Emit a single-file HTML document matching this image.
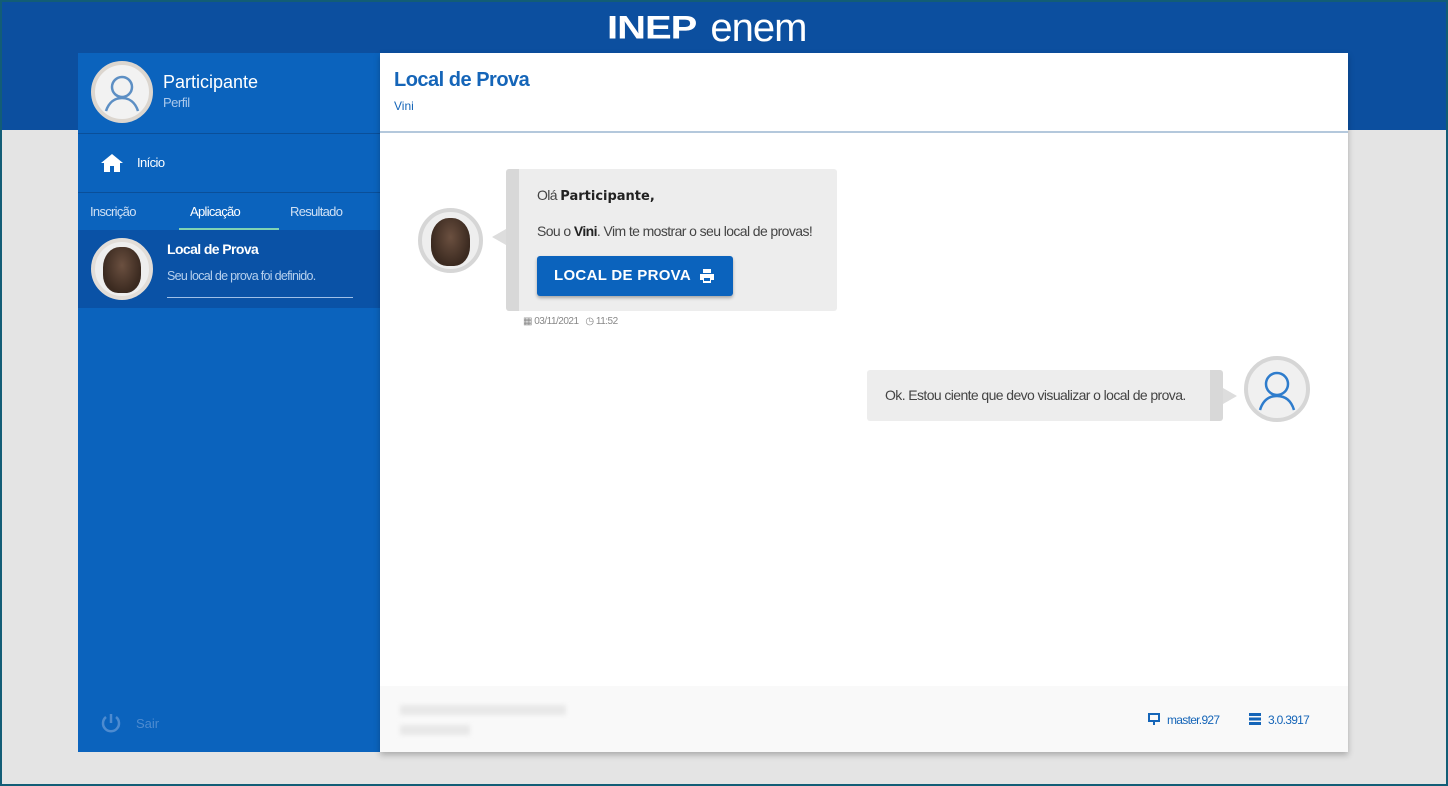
<!DOCTYPE html>
<html><head><meta charset="utf-8"><style>
*{margin:0;padding:0;box-sizing:border-box}
body{width:1448px;height:786px;position:relative;overflow:hidden;background:#e4e4e4;font-family:"Liberation Sans",sans-serif}
.frame{position:absolute;left:0;top:0;width:1448px;height:786px;border:2px solid #125d76;z-index:10;pointer-events:none}
.top{position:absolute;left:0;top:0;width:1448px;height:130px;background:#0c4f9f}
.logo{position:absolute;left:607px;top:6px;color:#fff;font-size:40px;letter-spacing:-1px}
.logo b{font-weight:900;letter-spacing:-1px;margin-right:14px;display:inline-block;transform:scaleY(.8)}
.side{position:absolute;left:78px;top:53px;width:302px;height:699px;background:#0b63bd;color:#fff}
.main{position:absolute;left:380px;top:53px;width:968px;height:699px;background:#fff;box-shadow:0 3px 6px rgba(0,0,0,.25)}
.av{position:absolute;border-radius:50%;background:#eee;border:4px solid #d6d6d6;overflow:hidden}
.face{position:absolute;left:50%;top:10%;width:70%;height:84%;margin-left:-35%;background:radial-gradient(ellipse at 50% 40%,#6b5040,#3b2a20 70%);border-radius:45% 45% 40% 40%}
.line{position:absolute;left:0;width:302px;height:1px;background:#0a4f99}
.bub{position:absolute;background:#ededed;border-radius:3px;color:#444;font-size:14px;letter-spacing:-.6px}
</style></head><body>
<div class="frame"></div>
<div class="top"><div class="logo"><b>INEP</b>enem</div></div>
<div class="side">
  <div class="av" style="left:13px;top:8px;width:62px;height:62px;background:#f2f2f2;border-color:#dcd6cf">
    <svg width="54" height="54" viewBox="0 0 54 54"><circle cx="27" cy="22" r="10" fill="none" stroke="#5d8fc4" stroke-width="2.5"/><path d="M11 46c3-9 9-13 16-13s13 4 16 13" fill="none" stroke="#5d8fc4" stroke-width="2.5"/></svg>
  </div>
  <div style="position:absolute;left:85px;top:19px;font-size:18px">Participante</div>
  <div style="position:absolute;left:85px;top:42px;font-size:13px;color:#a9c8ec;letter-spacing:-.5px">Perfil</div>
  <div class="line" style="top:80px"></div>
  <svg style="position:absolute;left:23px;top:100px" width="22" height="19" viewBox="0 0 22 19"><path d="M11 1L0 10h3v9h6v-6h4v6h6v-9h3z" fill="#fff"/></svg>
  <div style="position:absolute;left:59px;top:102px;font-size:13px;letter-spacing:-.6px">Início</div>
  <div class="line" style="top:139px"></div>
  <div style="position:absolute;left:12px;top:151px;font-size:13px;color:#cfe0f4;letter-spacing:-.7px">Inscrição</div>
  <div style="position:absolute;left:112px;top:151px;font-size:13px;letter-spacing:-.7px">Aplicação</div>
  <div style="position:absolute;left:212px;top:151px;font-size:13px;color:#cfe0f4;letter-spacing:-.7px">Resultado</div>
  <div style="position:absolute;left:101px;top:175px;width:100px;height:2px;background:#7fd3b4"></div>
  <div style="position:absolute;left:0;top:177px;width:302px;height:78px;background:#0a52a6"></div>
  <div class="av" style="left:13px;top:185px;width:62px;height:62px;border-color:#e2ddd8"><div class="face"></div></div>
  <div style="position:absolute;left:89px;top:188px;font-size:14px;font-weight:bold;letter-spacing:-.6px">Local de Prova</div>
  <div style="position:absolute;left:89px;top:216px;font-size:12.5px;color:#b6d0ee;letter-spacing:-.7px">Seu local de prova foi definido.</div>
  <div style="position:absolute;left:89px;top:244px;width:186px;height:1px;background:#9fc0e8"></div>
  <svg style="position:absolute;left:22px;top:659px" width="22" height="22" viewBox="0 0 22 22"><path d="M6 5a8 8 0 1 0 10 0" fill="none" stroke="#4d8bd0" stroke-width="2.5"/><path d="M11 2v9" stroke="#4d8bd0" stroke-width="2.5"/></svg>
  <div style="position:absolute;left:58px;top:663px;font-size:13px;color:#4d8bd0">Sair</div>
</div>
<div class="main">
  <div style="position:absolute;left:14px;top:16px;font-size:20px;font-weight:bold;color:#1565b8;letter-spacing:-.5px">Local de Prova</div>
  <div style="position:absolute;left:14px;top:46px;font-size:12px;color:#1565b8">Vini</div>
  <div style="position:absolute;left:0;top:78px;width:968px;height:2px;background:#b4c8dc"></div>
  <div class="av" style="left:38px;top:155px;width:65px;height:65px"><div class="face"></div></div>
  <div style="position:absolute;left:112px;top:176px;width:0;height:0;border-top:8px solid transparent;border-bottom:8px solid transparent;border-right:14px solid #ddd"></div>
  <div class="bub" style="left:126px;top:116px;width:331px;height:142px;border-left:13px solid #d8d8d8">
    <div style="position:absolute;left:18px;top:18px">Olá <b style="font-family:'DejaVu Sans';font-size:13px;color:#222;letter-spacing:0">Participante,</b></div>
    <div style="position:absolute;left:18px;top:54px">Sou o <b style="color:#222">Vini</b>. Vim te mostrar o seu local de provas!</div>
    <div style="position:absolute;left:18px;top:87px;width:196px;height:40px;background:#0b63bd;border-radius:3px;box-shadow:0 2px 3px rgba(0,0,0,.3);color:#fff;font-weight:bold;font-size:15px;letter-spacing:.3px;padding:11px 0 0 17px">LOCAL DE PROVA
      <svg style="position:absolute;left:162px;top:12px" width="16" height="16" viewBox="0 0 16 16"><path d="M4 1h8v4H4zM1 6h14v6h-3v3H4v-3H1zM5 10v3h6v-3z" fill="#fff" fill-rule="evenodd"/></svg></div>
  </div>
  <div style="position:absolute;left:143px;top:263px;font-size:10px;color:#888;letter-spacing:-.5px">▦ 03/11/2021 &nbsp; ◷ 11:52</div>
  <div class="bub" style="left:487px;top:317px;width:356px;height:51px;border-right:13px solid #d8d8d8">
    <div style="position:absolute;left:18px;top:17px">Ok. Estou ciente que devo visualizar o local de prova.</div>
  </div>
  <div style="position:absolute;left:843px;top:335px;width:0;height:0;border-top:8px solid transparent;border-bottom:8px solid transparent;border-left:14px solid #ddd"></div>
  <div class="av" style="left:864px;top:303px;width:66px;height:66px;background:#f0f0f0">
    <svg width="58" height="58" viewBox="0 0 58 58"><circle cx="29" cy="24" r="11" fill="none" stroke="#2e7ccc" stroke-width="2.5"/><path d="M12 50c3-10 9-14 17-14s14 4 17 14" fill="none" stroke="#2e7ccc" stroke-width="2.5"/></svg>
  </div>
  <div style="position:absolute;left:0;top:633px;width:968px;height:66px;background:#f9f9f9"></div>
  <div style="position:absolute;left:20px;top:652px;width:166px;height:10px;background:#e8e8e8;filter:blur(2px)"></div>
  <div style="position:absolute;left:20px;top:672px;width:70px;height:10px;background:#e8e8e8;filter:blur(2px)"></div>
  <svg style="position:absolute;left:767px;top:659px" width="14" height="14" viewBox="0 0 14 14"><path d="M1 1h12v9H1z M6 10h2v3H6z" fill="#1565b8"/><path d="M3 3h8v5H3z" fill="#f9f9f9"/></svg>
  <div style="position:absolute;left:787px;top:660px;font-size:12px;color:#1565b8;letter-spacing:-.7px">master.927</div>
  <svg style="position:absolute;left:868px;top:659px" width="14" height="14" viewBox="0 0 14 14"><path d="M1 1h12v3H1zM1 5.5h12v3H1zM1 10h12v3H1z" fill="#1565b8"/></svg>
  <div style="position:absolute;left:888px;top:660px;font-size:12px;color:#1565b8;letter-spacing:-.7px">3.0.3917</div>
</div>
</body></html>
